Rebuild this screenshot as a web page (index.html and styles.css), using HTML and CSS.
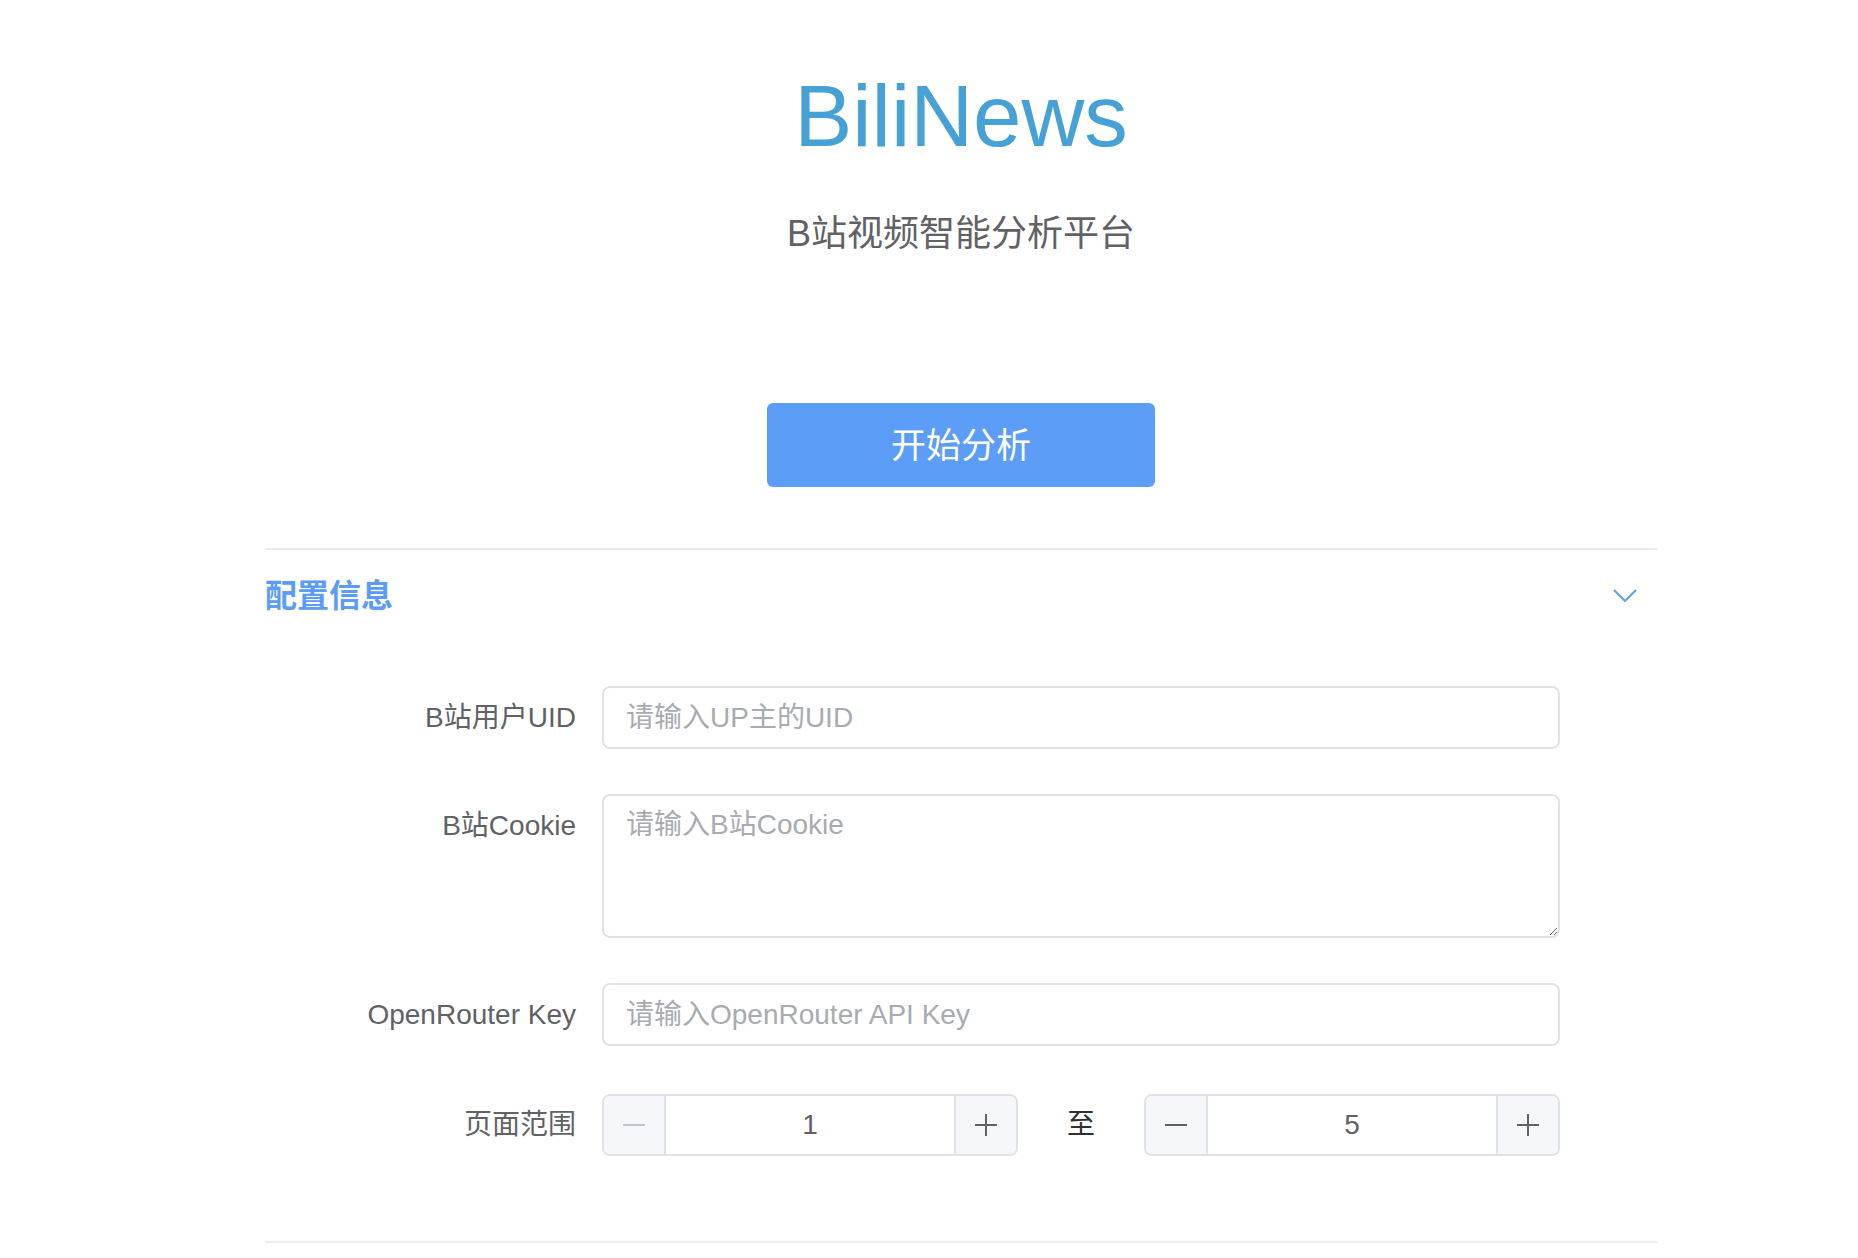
FILE: index.html
```html
<!DOCTYPE html>
<html lang="zh-CN">
<head>
<meta charset="utf-8">
<title>BiliNews</title>
<link rel="stylesheet" href="styles.css">
</head>
<body>
<div class="page">
  <header class="hero">
    <h1 class="hero-title">BiliNews</h1>
    <p class="hero-subtitle">B站视频智能分析平台</p>
  </header>

  <div class="actions">
    <button class="btn-primary" type="button">开始分析</button>
  </div>

  <section class="collapse">
    <div class="collapse-header">
      <span class="collapse-title">配置信息</span>
      <svg class="chevron" width="24" height="13" viewBox="0 0 24 13" aria-hidden="true">
        <polyline points="1,1 12,12 23,1" fill="none" stroke="#5a9cf8" stroke-width="2"/>
      </svg>
    </div>
    <div class="collapse-content">
      <form class="form">
        <div class="form-row">
          <label class="form-label">B站用户UID</label>
          <div class="form-field">
            <input class="text-input" type="text" placeholder="请输入UP主的UID">
          </div>
        </div>
        <div class="form-row">
          <label class="form-label">B站Cookie</label>
          <div class="form-field">
            <textarea class="text-area" placeholder="请输入B站Cookie"></textarea>
          </div>
        </div>
        <div class="form-row">
          <label class="form-label">OpenRouter Key</label>
          <div class="form-field">
            <input class="text-input" type="text" placeholder="请输入OpenRouter API Key">
          </div>
        </div>
        <div class="form-row form-row-range">
          <label class="form-label">页面范围</label>
          <div class="form-field range">
            <div class="number-input">
              <span class="num-btn num-btn-left disabled"><span class="minus"></span></span>
              <span class="num-value">1</span>
              <span class="num-btn num-btn-right"><span class="plus"></span></span>
            </div>
            <span class="range-sep">至</span>
            <div class="number-input">
              <span class="num-btn num-btn-left"><span class="minus"></span></span>
              <span class="num-value">5</span>
              <span class="num-btn num-btn-right"><span class="plus"></span></span>
            </div>
          </div>
        </div>
      </form>
    </div>
  </section>
</div>
</body>
</html>
```
FILE: styles.css
```css
* { box-sizing: border-box; }

html, body {
  margin: 0;
  padding: 0;
  background: #ffffff;
}

body {
  font-family: "Liberation Sans", "Noto Sans CJK SC", sans-serif;
  color: #606266;
}

.page {
  width: 1392px;
  margin-left: 265px;
  padding-top: 72px;
}

.hero {
  text-align: center;
}

.hero-title {
  margin: 0;
  font-size: 87px;
  line-height: 88px;
  font-weight: 400;
  color: #46a2d6;
}

.hero-subtitle {
  margin: 56px 0 0;
  font-size: 36px;
  line-height: 36px;
  color: #606266;
}

.actions {
  display: flex;
  justify-content: center;
  padding-top: 151px;
  padding-bottom: 61px;
}

.btn-primary {
  width: 388px;
  height: 84px;
  border: none;
  border-radius: 6px;
  background: #5c9df8;
  color: #ffffff;
  font-family: "Liberation Sans", "Noto Sans CJK SC", sans-serif;
  font-size: 35px;
  line-height: 40px;
  padding: 2px 0 0;
}

.collapse {
  border-top: 2px solid #ebecf1;
  border-bottom: 2px solid #ebecf1;
}

.collapse-header {
  height: 92px;
  display: flex;
  align-items: center;
  justify-content: space-between;
  padding-right: 20px;
}

.collapse-title {
  font-size: 32px;
  line-height: 40px;
  font-weight: 600;
  color: #5a9cf8;
}

.chevron {
  display: block;
  position: relative;
  top: -1px;
}

.collapse-content {
  padding-top: 44px;
  padding-bottom: 85px;
}

.form {
  display: flex;
  flex-direction: column;
  gap: 45px;
}

.form-row {
  display: grid;
  grid-template-columns: 311px 958px;
  column-gap: 26px;
  align-items: start;
}

.form-row-range {
  margin-top: 3px;
}

.form-label {
  text-align: right;
  font-size: 28px;
  line-height: 63px;
  color: #606266;
  white-space: nowrap;
}

.form-row-range .form-label {
  line-height: 62px;
}

.text-input,
.text-area {
  display: block;
  width: 100%;
  border: 2px solid #e0e2e8;
  border-radius: 8px;
  background: #ffffff;
  font-family: "Liberation Sans", "Noto Sans CJK SC", sans-serif;
  font-size: 28px;
  color: #606266;
  outline: none;
  margin: 0;
}

.text-input {
  height: 63px;
  padding: 0 22px;
}

.text-area {
  height: 144px;
  padding: 8px 22px;
  line-height: 42px;
  resize: vertical;
}

.text-input::placeholder,
.text-area::placeholder {
  color: #a8abb2;
}

.range {
  display: flex;
  align-items: center;
}

.number-input {
  width: 416px;
  height: 62px;
  display: flex;
  border: 2px solid #e0e2e8;
  border-radius: 8px;
  overflow: hidden;
}

.num-btn {
  width: 62px;
  flex: none;
  display: flex;
  align-items: center;
  justify-content: center;
  background: #f5f7fa;
}

.num-btn-left {
  border-right: 2px solid #e0e2e8;
}

.num-btn-right {
  border-left: 2px solid #e0e2e8;
}

.num-value {
  flex: 1;
  text-align: center;
  font-size: 28px;
  line-height: 58px;
  color: #606266;
}

.minus,
.plus {
  display: block;
  width: 22px;
  height: 22px;
  position: relative;
}

.minus::before,
.plus::before,
.plus::after {
  content: "";
  position: absolute;
  background: #606266;
}

.minus::before,
.plus::before {
  left: 0;
  right: 0;
  top: 10px;
  height: 2px;
}

.plus::after {
  top: 0;
  bottom: 0;
  left: 10px;
  width: 2px;
}

.disabled .minus::before {
  background: #c0c4cc;
}

.range-sep {
  flex: 1;
  text-align: center;
  font-size: 28px;
  line-height: 40px;
  color: #303133;
  padding-bottom: 1px;
}
```
